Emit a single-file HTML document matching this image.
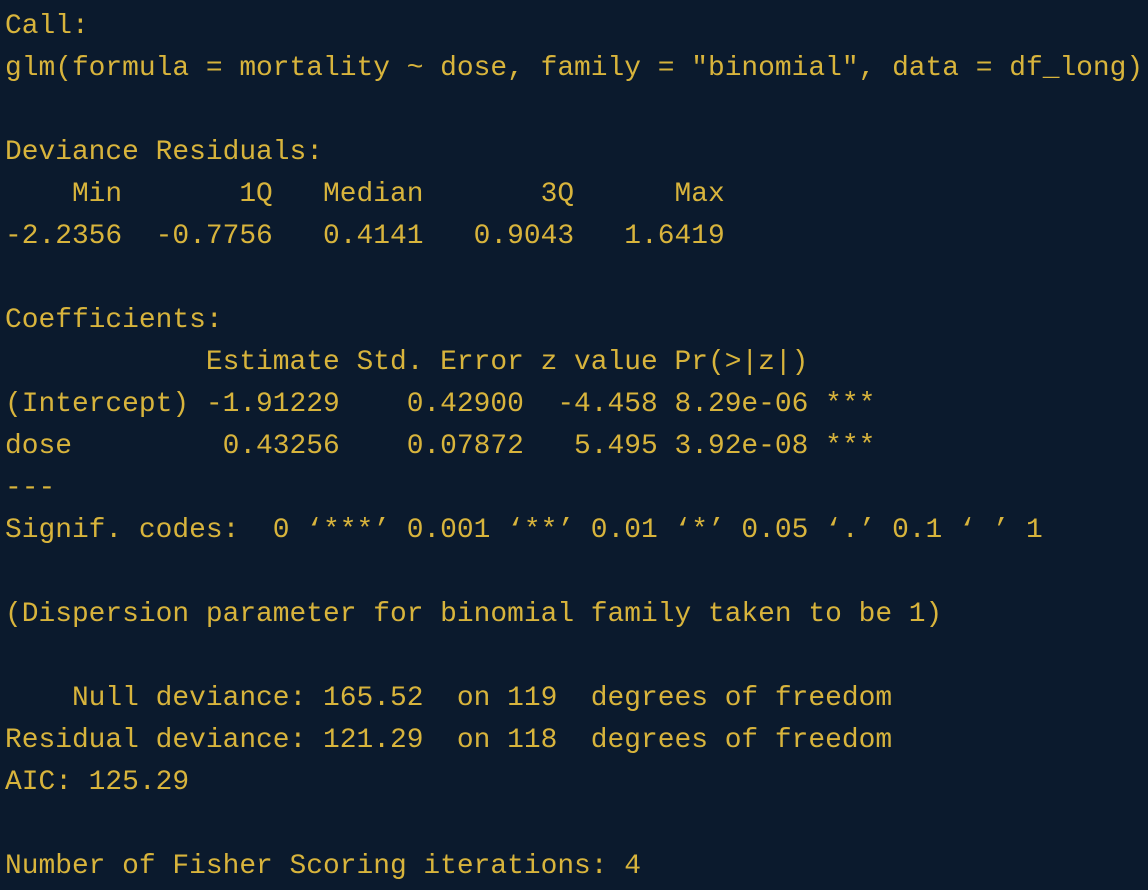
<!DOCTYPE html>
<html><head><meta charset="utf-8"><style>
html,body{margin:0;padding:0;background:#0b1a2d;width:1148px;height:890px;overflow:hidden}
pre{margin:0;padding:6px 0 0 5px;font-family:"Liberation Mono",monospace;font-size:27.9px;line-height:42px;color:#d8b43c;white-space:pre}
</style></head><body><pre>Call:
glm(formula = mortality ~ dose, family = "binomial", data = df_long)

Deviance Residuals:
    Min       1Q   Median       3Q      Max
-2.2356  -0.7756   0.4141   0.9043   1.6419

Coefficients:
            Estimate Std. Error z value Pr(&gt;|z|)
(Intercept) -1.91229    0.42900  -4.458 8.29e-06 ***
dose         0.43256    0.07872   5.495 3.92e-08 ***
---
Signif. codes:  0 ‘***’ 0.001 ‘**’ 0.01 ‘*’ 0.05 ‘.’ 0.1 ‘ ’ 1

(Dispersion parameter for binomial family taken to be 1)

    Null deviance: 165.52  on 119  degrees of freedom
Residual deviance: 121.29  on 118  degrees of freedom
AIC: 125.29

Number of Fisher Scoring iterations: 4</pre></body></html>
